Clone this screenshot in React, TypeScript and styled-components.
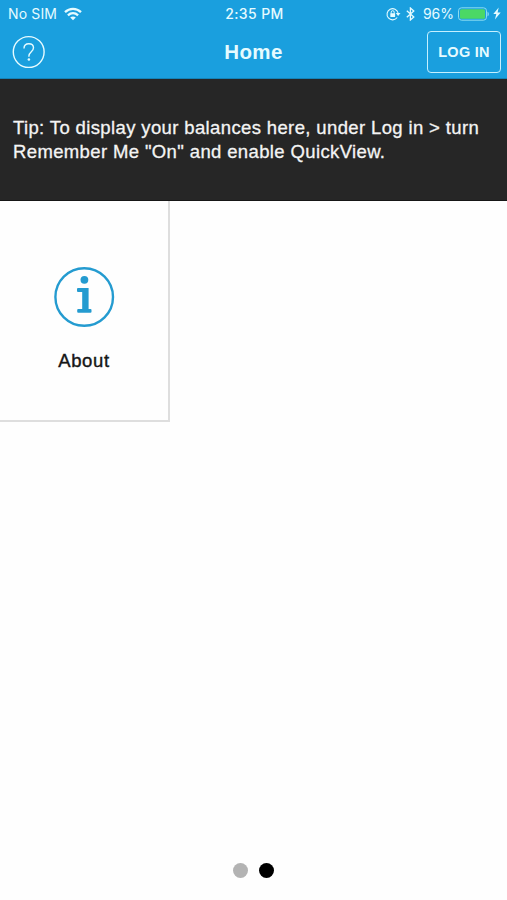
import React from "react";
import styled, { createGlobalStyle } from "styled-components";

const GlobalStyle = createGlobalStyle`
  * { box-sizing: border-box; }
  body { margin: 0; background: #fefefe; }
`;

const Screen = styled.div`
  width: 507px;
  height: 900px;
  display: flex;
  flex-direction: column;
  overflow: hidden;
  background: #fefefe;
  font-family: "Liberation Sans", Arial, sans-serif;
`;

const Header = styled.header`
  height: 79px;
  flex: none;
  background: #1a9fde;
  color: #e6fbff;
  border-bottom: 1px solid #1483b8;
`;

const StatusBar = styled.div`
  height: 26px;
  display: grid;
  grid-template-columns: 1fr auto 1fr;
  align-items: center;
  padding: 0 6px 0 8px;
  font-family: Inter, sans-serif;
  font-size: 14px;
  line-height: 26px;
`;

const StatusGroup = styled.div<{ $end?: boolean }>`
  display: flex;
  align-items: center;
  justify-content: ${(p) => (p.$end ? "flex-end" : "flex-start")};
  svg { flex: none; display: block; }
`;

const Carrier = styled.span`
  letter-spacing: 0.15px;
  margin: 1px 7px 0 0;
`;

const Clock = styled.span`
  font-weight: 500;
  letter-spacing: 0.4px;
  padding-top: 1px;
`;

const Percent = styled.span`
  margin: 1px 4px 0 8px;
`;

const NavBar = styled.nav`
  height: 51px;
  display: grid;
  grid-template-columns: 1fr auto 1fr;
  align-items: center;
  padding: 0 6px 0 12px;
`;

const HelpButton = styled.button`
  width: 34px;
  height: 34px;
  padding: 0;
  border: 0;
  background: none;
  color: inherit;
  svg { display: block; }
`;

const Title = styled.h1`
  margin: 0;
  padding-right: 6px;
  font-size: 20.5px;
  line-height: 24px;
  font-weight: 700;
  letter-spacing: 0.4px;
`;

const LoginButton = styled.button`
  justify-self: end;
  width: 74px;
  height: 42px;
  padding: 0;
  border: 1.5px solid #c5f0ff;
  border-radius: 4px;
  background: none;
  color: inherit;
  font: 700 14.5px/20px "Liberation Sans", Arial, sans-serif;
  letter-spacing: 0.25px;
`;

const Tip = styled.p`
  height: 122px;
  flex: none;
  margin: 0;
  padding: 37px 0 0 13px;
  background: #262626;
  border-bottom: 1px solid #161616;
  color: #f4f4f4;
  font-size: 18.5px;
  line-height: 24px;
  -webkit-text-stroke: 0.3px currentColor;
`;

const TipLine = styled.span`
  display: block;
  white-space: nowrap;
  letter-spacing: 0.37px;
`;

const Tiles = styled.main`
  flex: 1;
  display: grid;
  grid-template-columns: repeat(3, 170px);
  grid-auto-rows: 221px;
`;

const Tile = styled.button`
  display: flex;
  flex-direction: column;
  align-items: center;
  justify-content: flex-start;
  padding: 65px 0 0;
  border: 0;
  border-right: 2px solid #dedede;
  border-bottom: 2px solid #dedede;
  background: none;
  svg { display: block; }
`;

const TileLabel = styled.span`
  margin-top: 21px;
  color: #161616;
  font: 400 18.5px/24px "Liberation Sans", Arial, sans-serif;
  letter-spacing: 0.65px;
  -webkit-text-stroke: 0.4px currentColor;
`;

const Pager = styled.footer`
  height: 60px;
  flex: none;
  display: flex;
  justify-content: center;
  align-items: center;
  gap: 11px;
`;

const Dot = styled.span<{ $active?: boolean }>`
  width: 15px;
  height: 15px;
  border-radius: 50%;
  background: ${(p) => (p.$active ? "#000" : "#b3b3b3")};
`;

const WifiIcon = () => (
  <svg width="18" height="14" viewBox="0 0 18 14" fill="none" stroke="currentColor" strokeWidth="2.3">
    <path d="M1 5.2C5.6 .8 12.4 .8 17 5.2" />
    <path d="M3.9 8.3c3-2.8 7.2-2.8 10.2 0" />
    <path d="M9 13.2 6.2 10.5c1.6-1.4 4-1.4 5.6 0z" fill="currentColor" stroke="none" />
  </svg>
);

const RotationLockIcon = () => (
  <svg width="15" height="14" viewBox="0 0 15 14" fill="none" stroke="currentColor">
    <path d="M11.2 10.5A5.6 5.6 0 1 1 12.1 6" strokeWidth="1.1" />
    <path d="M9.8 6h4.7l-2.4 3z" fill="currentColor" stroke="none" />
    <path d="M5.2 6.8V5.2a1.5 1.5 0 0 1 3 0v1.6" strokeWidth="1" />
    <rect x="4.3" y="6.3" width="4.8" height="3.7" rx=".5" fill="currentColor" stroke="none" />
  </svg>
);

const BluetoothIcon = () => (
  <svg width="9" height="14" viewBox="0 0 9 14" fill="none" stroke="currentColor" strokeWidth="1.3">
    <path d="m.8 3.8 7 6.2L4.4 13V1l3.4 3-7 6.2" />
  </svg>
);

const BatteryIcon = () => (
  <svg width="32" height="14" viewBox="0 0 32 14">
    <rect x=".5" y=".8" width="28" height="12.4" rx="3" fill="none" stroke="#8bdcf1" />
    <rect x="2" y="2.3" width="25" height="9.4" rx="1.5" fill="#4bd865" />
    <path d="M29.5 4.7c1.8.6 1.8 4 0 4.6z" fill="#8bdcf1" />
  </svg>
);

const BoltIcon = () => (
  <svg width="8" height="13" viewBox="0 0 8 13" fill="currentColor">
    <path d="M5.7.5.3 7h3L1.9 12.5 7.7 5.4H4.6z" />
  </svg>
);

const HelpIcon = () => (
  <svg width="34" height="34" viewBox="0 0 34 34" fill="none" stroke="currentColor" strokeWidth="1.4">
    <circle cx="16.7" cy="17" r="15.4" />
    <path d="M12 13.5c0-3 1.9-4.8 4.8-4.8 2.8 0 4.7 1.6 4.7 4.1 0 4-4.6 3.8-4.6 8.3v.6" />
    <circle cx="16.9" cy="24.5" r="1.3" fill="currentColor" stroke="none" />
  </svg>
);

const InfoIcon = () => (
  <svg width="62" height="62" viewBox="0 0 62 62" fill="#249bd0">
    <circle cx="31.2" cy="31" r="28.8" fill="none" stroke="#249bd0" strokeWidth="2.4" />
    <circle cx="31.4" cy="13.8" r="3.9" />
    <path d="M25 22.1h10.6v20.8h1.9q1 0 1 1v1.8q0 1-1 1H25.2q-1 0-1-1v-1.8q0-1 1-1h4V26H25q-1 0-1-1v-1.9q0-1 1-1z" />
  </svg>
);

const StatusIcons = styled.div`
  display: flex;
  align-items: center;
  gap: 5px;
`;

const PowerIcons = styled(StatusIcons)`
  gap: 3px;
`;

export default function App() {
  return (
    <>
      <GlobalStyle />
      <Screen>
        <Header>
          <StatusBar>
            <StatusGroup>
              <Carrier>No SIM</Carrier>
              <WifiIcon />
            </StatusGroup>
            <Clock>2:35 PM</Clock>
            <StatusGroup $end>
              <StatusIcons>
                <RotationLockIcon />
                <BluetoothIcon />
              </StatusIcons>
              <Percent>96%</Percent>
              <PowerIcons>
                <BatteryIcon />
                <BoltIcon />
              </PowerIcons>
            </StatusGroup>
          </StatusBar>
          <NavBar>
            <HelpButton aria-label="Help"><HelpIcon /></HelpButton>
            <Title>Home</Title>
            <LoginButton>LOG IN</LoginButton>
          </NavBar>
        </Header>
        <Tip>
          <TipLine>Tip: To display your balances here, under Log in &gt; turn</TipLine>
          <TipLine>Remember Me "On" and enable QuickView.</TipLine>
        </Tip>
        <Tiles>
          <Tile>
            <InfoIcon />
            <TileLabel>About</TileLabel>
          </Tile>
        </Tiles>
        <Pager>
          <Dot />
          <Dot $active />
        </Pager>
      </Screen>
    </>
  );
}
